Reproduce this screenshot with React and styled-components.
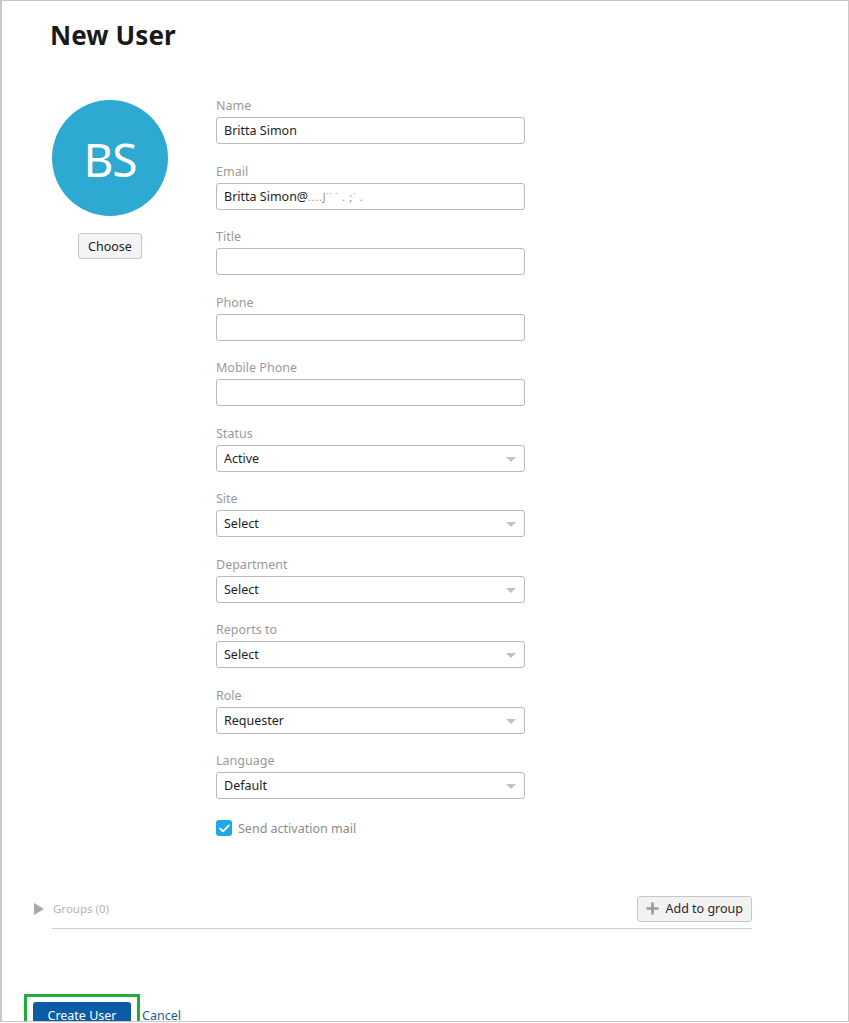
import React from 'react'
import styled, { createGlobalStyle } from 'styled-components'

const GlobalStyle = createGlobalStyle`
  html, body {
    margin: 0;
    padding: 0;
    background: #ffffff;
  }
  body {
    font-family: "Noto Sans", "Open Sans", Arial, sans-serif;
    color: #222;
  }
`

const fields = [
  { label: 'Name', value: 'Britta Simon' },
  { label: 'Email', value: 'Britta Simon@', blur: '....J\u02D9\u02D9 \u02D9 . ;\u02D9 .' },
  { label: 'Title' },
  { label: 'Phone' },
  { label: 'Mobile Phone' },
  { label: 'Status', value: 'Active', select: true },
  { label: 'Site', value: 'Select', select: true },
  { label: 'Department', value: 'Select', select: true },
  { label: 'Reports to', value: 'Select', select: true },
  { label: 'Role', value: 'Requester', select: true },
  { label: 'Language', value: 'Default', select: true },
]

function App() {
  return (
    <>
      <GlobalStyle />
      <Frame>
        <Title>New User</Title>
        <Body>
          <AvatarColumn>
            <Avatar>BS</Avatar>
            <GrayButton>Choose</GrayButton>
          </AvatarColumn>
          <Form>
            {fields.map((f) => (
              <Field key={f.label}>
                <Label>{f.label}</Label>
                <Input>
                  <span>
                    {f.value}
                    {f.blur && <Blurred>{f.blur}</Blurred>}
                  </span>
                  {f.select && <Caret />}
                </Input>
              </Field>
            ))}
            <CheckRow>
              <CheckBox>
                <svg width="11" height="9" viewBox="0 0 11 9">
                  <polyline points="1.2,4.6 4,7.3 9.8,1.5" fill="none" stroke="#fff" strokeWidth="1.9" strokeLinecap="round" strokeLinejoin="round" />
                </svg>
              </CheckBox>
              <CheckLabel>Send activation mail</CheckLabel>
            </CheckRow>
          </Form>
        </Body>
        <Groups>
          <Triangle />
          <GroupsLabel>Groups (0)</GroupsLabel>
          <AddButton>
            <svg width="13" height="13" viewBox="0 0 13 13">
              <path d="M6.5 0.5v12M0.5 6.5h12" stroke="#9a9a9a" strokeWidth="2.6" />
            </svg>
            Add to group
          </AddButton>
        </Groups>
        <Footer>
          <Highlight>
            <PrimaryButton>Create User</PrimaryButton>
          </Highlight>
          <CancelLink>Cancel</CancelLink>
        </Footer>
      </Frame>
    </>
  )
}

export default App

const Frame = styled.div`
  box-sizing: border-box;
  width: 849px;
  height: 1022px;
  border: 1px solid #c9c9c9;
  border-left-width: 2px;
  overflow: hidden;
  display: flex;
  flex-direction: column;
`

const Title = styled.h1`
  margin: 16px 0 0 48px;
  font-size: 26px;
  line-height: 36px;
  font-weight: 700;
  color: #1a1a1a;
  letter-spacing: 0.1px;
`

const Body = styled.div`
  display: flex;
  margin-top: 43px;
  padding-left: 50px;
`

const AvatarColumn = styled.div`
  width: 116px;
  padding-top: 4px;
  display: flex;
  flex-direction: column;
  align-items: center;
  gap: 17px;
`

const Avatar = styled.div`
  width: 116px;
  height: 116px;
  border-radius: 50%;
  background: #2ea9d1;
  color: #fff;
  display: flex;
  align-items: center;
  justify-content: center;
  font-size: 46px;
  letter-spacing: -1px;
  padding-top: 2px;
  box-sizing: border-box;
`

const GrayButton = styled.div`
  box-sizing: border-box;
  height: 26px;
  padding: 0 9px;
  display: flex;
  align-items: center;
  background: #f4f4f4;
  border: 1px solid #c6c6c6;
  border-radius: 3px;
  font-size: 12.5px;
  color: #222;
`

const Form = styled.div`
  margin-left: 48px;
  width: 309px;
  display: flex;
  flex-direction: column;
`

const Field = styled.div`
  display: flex;
  flex-direction: column;
  gap: 3px;
  margin-bottom: 17.5px;
`

const Label = styled.div`
  font-size: 12.5px;
  line-height: 18px;
  padding-top: 1px;
  margin-bottom: -1px;
  color: #9a9a9a;
`

const Input = styled.div`
  box-sizing: border-box;
  height: 27px;
  border: 1px solid #b9b9b9;
  border-radius: 3px;
  padding: 0 8px 0 7px;
  display: flex;
  align-items: center;
  justify-content: space-between;
  font-size: 12.5px;
  color: #1e1e1e;
  background: #fff;
`

const Blurred = styled.span`
  color: #8a8a8a;
  letter-spacing: 1px;
  font-size: 10px;
`

const Caret = styled.span`
  width: 0;
  height: 0;
  border-left: 5px solid transparent;
  border-right: 5px solid transparent;
  border-top: 5px solid #c2c2c2;
  margin-top: 2px;
`

const CheckRow = styled.div`
  display: flex;
  align-items: center;
  gap: 6px;
  margin-top: 3px;
`

const CheckBox = styled.span`
  width: 16px;
  height: 16px;
  border-radius: 3px;
  background: #1ea8e6;
  display: flex;
  align-items: center;
  justify-content: center;
`

const CheckLabel = styled.span`
  font-size: 12.5px;
  color: #8c8c8c;
`

const Groups = styled.div`
  margin: 59px 0 0 50px;
  width: 700px;
  display: flex;
  align-items: center;
  padding-bottom: 6px;
  border-bottom: 1px solid #cfcfcf;
`

const Triangle = styled.span`
  width: 0;
  height: 0;
  margin-left: -18px;
  border-top: 6.5px solid transparent;
  border-bottom: 6.5px solid transparent;
  border-left: 10px solid #a9a9a9;
`

const GroupsLabel = styled.span`
  margin-left: 9px;
  font-size: 11.5px;
  color: #b4b4b4;
  flex: 1;
`

const AddButton = styled(GrayButton)`
  gap: 6px;
  padding: 0 8px 0 8px;
  background: #f2f2f2;
  font-size: 12.5px;
  color: #2a2a2a;
`

const Footer = styled.div`
  margin: 65px 0 0 22px;
  display: flex;
  align-items: flex-start;
`

const Highlight = styled.div`
  border: 3px solid #1fae3c;
  border-bottom: none;
  padding: 5px 6px 0 6px;
`

const PrimaryButton = styled.div`
  width: 98px;
  height: 30px;
  box-sizing: border-box;
  padding-top: 5px;
  text-align: center;
  background: #0b5ca6;
  border-radius: 3px;
  color: #fff;
  font-size: 12.5px;
`

const CancelLink = styled.span`
  margin: 13px 0 0 2px;
  font-size: 12.5px;
  color: #1b5c98;
`
